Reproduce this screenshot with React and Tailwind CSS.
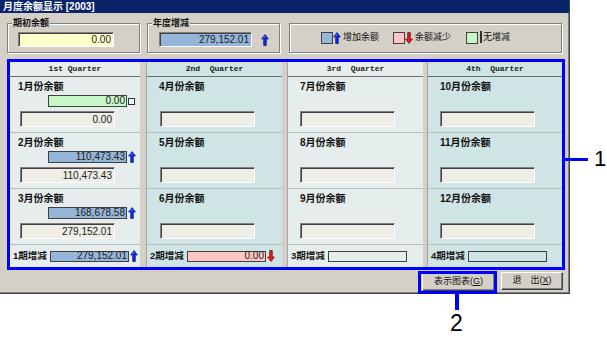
import React from "react";

const quarters = [
  {
    title: "1st Quarter",
    width: "w-[130px]",
    bg: "bg-[#e5eded]",
    pad: "pl-[8px]",
    boxPad: "ml-[2px]",
    rows: [
      { label: "1月份余额", change: { value: "0.00", kind: "none" }, total: "0.00" },
      { label: "2月份余额", change: { value: "110,473.43", kind: "up" }, total: "110,473.43" },
      { label: "3月份余额", change: { value: "168,678.58", kind: "up" }, total: "279,152.01" },
    ],
    period: { label: "1期增减", value: "279,152.01", kind: "up" },
  },
  {
    title: "2nd  Quarter",
    width: "w-[135px]",
    bg: "bg-[#cfe5e5]",
    pad: "pl-[12px]",
    boxPad: "ml-[1px]",
    rows: [{ label: "4月份余额" }, { label: "5月份余额" }, { label: "6月份余额" }],
    period: { label: "2期增减", value: "0.00", kind: "down" },
  },
  {
    title: "3rd  Quarter",
    width: "w-[135px]",
    bg: "bg-[#e5eded]",
    pad: "pl-[12px]",
    boxPad: "ml-[0px]",
    rows: [{ label: "7月份余额" }, { label: "8月份余额" }, { label: "9月份余额" }],
    period: { label: "3期增减" },
  },
  {
    title: "4th  Quarter",
    width: "w-[134px]",
    bg: "bg-[#cfe5e5]",
    pad: "pl-[12px]",
    boxPad: "ml-[0px]",
    rows: [{ label: "10月份余额" }, { label: "11月份余额" }, { label: "12月份余额" }],
    period: { label: "4期增减" },
  },
];

const kindBg = {
  none: "bg-[#c6f7c6]",
  up: "bg-[#96b6d9]",
  down: "bg-[#ffc6c6]",
};

function UpArrow() {
  return (
    <svg width="8" height="12" viewBox="0 0 8 12" className="shrink-0">
      <path d="M4 0.6L7.4 5H5.3V11.4H2.7V5H0.6Z" fill="#0a2cff" stroke="#00105a" strokeWidth="0.7" />
      <path d="M4 2L2.2 4.4" stroke="#9fb4ff" strokeWidth="0.6" />
    </svg>
  );
}

function DownArrow() {
  return (
    <svg width="8" height="12" viewBox="0 0 8 12" className="shrink-0">
      <path d="M4 11.4L7.4 7H5.3V0.6H2.7V7H0.6Z" fill="#f01c1c" stroke="#6a0000" strokeWidth="0.7" />
    </svg>
  );
}

function NoChange() {
  return <span className="w-[7px] h-[7px] border border-[#303030] bg-[#f4f4f4] shrink-0" />;
}

function KindIcon({ kind }) {
  if (kind === "up") return <UpArrow />;
  if (kind === "down") return <DownArrow />;
  if (kind === "none") return <NoChange />;
  return null;
}

function SunkenBox({ className, children }) {
  return (
    <div
      className={`border border-t-[#808080] border-l-[#808080] border-b-white border-r-white shadow-[inset_1px_1px_0_#404040] flex items-center justify-end pr-[2px] text-[10px] text-[#202020] ${className}`}
    >
      {children}
    </div>
  );
}

function MonthRow({ row, q }) {
  return (
    <div className={`h-[56px] border-b border-[#b6bebe] pt-[4px] ${q.pad}`}>
      <div className="h-[12px] leading-[12px] text-[10px] font-bold text-[#111]">{row.label}</div>
      <div className="h-[12px] mt-[2px] flex items-center">
        {row.change && (
          <>
            <div
              className={`ml-[30px] w-[79px] h-[12px] border border-[#404040] ${kindBg[row.change.kind]} flex items-center justify-end pr-[1px] text-[10px] leading-none text-[#202020]`}
            >
              {row.change.value}
            </div>
            <span className="ml-[1px] flex items-center">
              <KindIcon kind={row.change.kind} />
            </span>
          </>
        )}
      </div>
      <SunkenBox className={`mt-[4px] w-[95px] h-[16px] bg-[#eeede6] ${q.boxPad}`}>{row.total}</SunkenBox>
    </div>
  );
}

function PeriodRow({ q }) {
  const p = q.period;
  return (
    <div className="h-[22px] flex items-center pl-[3px]">
      <span className="w-[37px] text-[9.5px] font-bold text-[#111] whitespace-nowrap">{p.label}</span>
      <div
        className={`w-[79px] h-[11px] border border-[#404040] ${p.kind ? kindBg[p.kind] : ""} flex items-center justify-end pr-[1px] text-[10px] leading-none text-[#202020]`}
      >
        {p.value}
      </div>
      <span className="ml-[1px] flex items-center">
        <KindIcon kind={p.kind} />
      </span>
    </div>
  );
}

function Quarter({ q }) {
  return (
    <div className={`flex flex-col ${q.width} ${q.bg}`}>
      <div className="h-[15px] border-b border-[#6c6c6c] flex items-center justify-center font-['Liberation_Mono',monospace] font-bold text-[8px] whitespace-pre text-[#202020]">
        {q.title}
      </div>
      {q.rows.map((row) => (
        <MonthRow key={row.label} row={row} q={q} />
      ))}
      <PeriodRow q={q} />
    </div>
  );
}

function Separator({ w }) {
  return <div className={`${w} bg-[#d4d0c8] border-r border-[#a4a4a4]`} />;
}

function GroupBox({ label, className, children }) {
  return (
    <div
      className={`relative h-[30px] border border-[#808080] shadow-[inset_1px_1px_0_#fff,1px_1px_0_#fff] ${className}`}
    >
      {label && (
        <span className="absolute -top-[7px] left-[4px] bg-[#d4d0c8] px-[1px] text-[9px] leading-[12px] font-bold text-[#111]">
          {label}
        </span>
      )}
      {children}
    </div>
  );
}

function Button({ children, className }) {
  return (
    <div
      className={`h-[18px] bg-[#d4d0c8] border border-t-white border-l-white border-b-[#404040] border-r-[#404040] shadow-[inset_-1px_-1px_0_#808080] flex items-center justify-center text-[9px] text-[#111] ${className}`}
    >
      {children}
    </div>
  );
}

export default function App() {
  return (
    <div className="relative w-[607px] h-[339px] bg-white overflow-hidden font-['Liberation_Sans','Noto_Sans_CJK_SC',sans-serif]">
      {/* dialog window */}
      <div className="w-[570px] h-[294px] bg-[#d4d0c8] border-r border-b border-[#404040] shadow-[inset_-1px_-1px_0_#808080] flex flex-col">
        <div className="h-[13px] bg-[#0a246a] text-white text-[10px] font-bold leading-[13px] pl-[3px]">
          月度余额显示 [2003]
        </div>

        {/* top group boxes */}
        <div className="flex pt-[10px] pl-[7px]">
          <GroupBox label="期初余额" className="w-[133px] pt-[8px] pl-[10px]">
            <SunkenBox className="w-[96px] h-[15px] bg-[#ffffcc]">0.00</SunkenBox>
          </GroupBox>
          <GroupBox label="年度增减" className="ml-[7px] w-[133px] pt-[8px] pl-[11px] flex items-start">
            <SunkenBox className="w-[93px] h-[15px] bg-[#96b6d9]">279,152.01</SunkenBox>
            <span className="ml-[9px] mt-[2px] flex">
              <UpArrow />
            </span>
          </GroupBox>
          <GroupBox className="ml-[9px] w-[273px] pl-[31px] flex items-center text-[9px] text-[#111]">
            <div className="w-[72px] flex items-center">
              <span className="w-[12px] h-[12px] border border-[#404040] bg-[#96b6d9]" />
              <UpArrow />
              <span className="ml-[2px]">增加余额</span>
            </div>
            <div className="w-[73px] flex items-center">
              <span className="w-[12px] h-[12px] border border-[#404040] bg-[#ffc6c6]" />
              <DownArrow />
              <span className="ml-[2px]">余额减少</span>
            </div>
            <div className="flex items-center">
              <span className="w-[12px] h-[12px] border border-[#404040] bg-[#c6f7c6]" />
              <span className="ml-[2px]">
                <NoChange />
              </span>
              <span className="ml-[1px]">无增减</span>
            </div>
          </GroupBox>
        </div>

        {/* quarters panel */}
        <div className="mt-[6px] ml-[7px] w-[558px] h-[211px] border-[3px] border-[#0000ff] flex">
          <Quarter q={quarters[0]} />
          <Separator w="w-[7px]" />
          <Quarter q={quarters[1]} />
          <Separator w="w-[6px]" />
          <Quarter q={quarters[2]} />
          <Separator w="w-[5px]" />
          <Quarter q={quarters[3]} />
        </div>

        {/* buttons */}
        <div className="mt-[2px] flex justify-end items-start pr-[6px] gap-[6px]">
          <Button className="w-[73px] mt-[1px]">
            表示图表(<span className="underline">G</span>)
          </Button>
          <Button className="w-[62px]">
            退　出(<span className="underline">X</span>)
          </Button>
        </div>
      </div>

      {/* callout 1 */}
      <div className="absolute left-[565px] top-[158px] w-[23px] h-[3px] bg-[#0000ff]" />
      <span className="absolute left-[594px] top-[146px] text-[22px] leading-[26px] text-black font-['Liberation_Sans',sans-serif]">
        1
      </span>

      {/* callout 2 */}
      <div className="absolute left-[418px] top-[271px] w-[79px] h-[23px] border-[3px] border-[#0000ff]" />
      <div className="absolute left-[455px] top-[294px] w-[4px] h-[16px] bg-[#0000ff]" />
      <span className="absolute left-[450px] top-[310px] text-[23px] leading-[26px] text-black font-['Liberation_Sans',sans-serif]">
        2
      </span>
    </div>
  );
}
